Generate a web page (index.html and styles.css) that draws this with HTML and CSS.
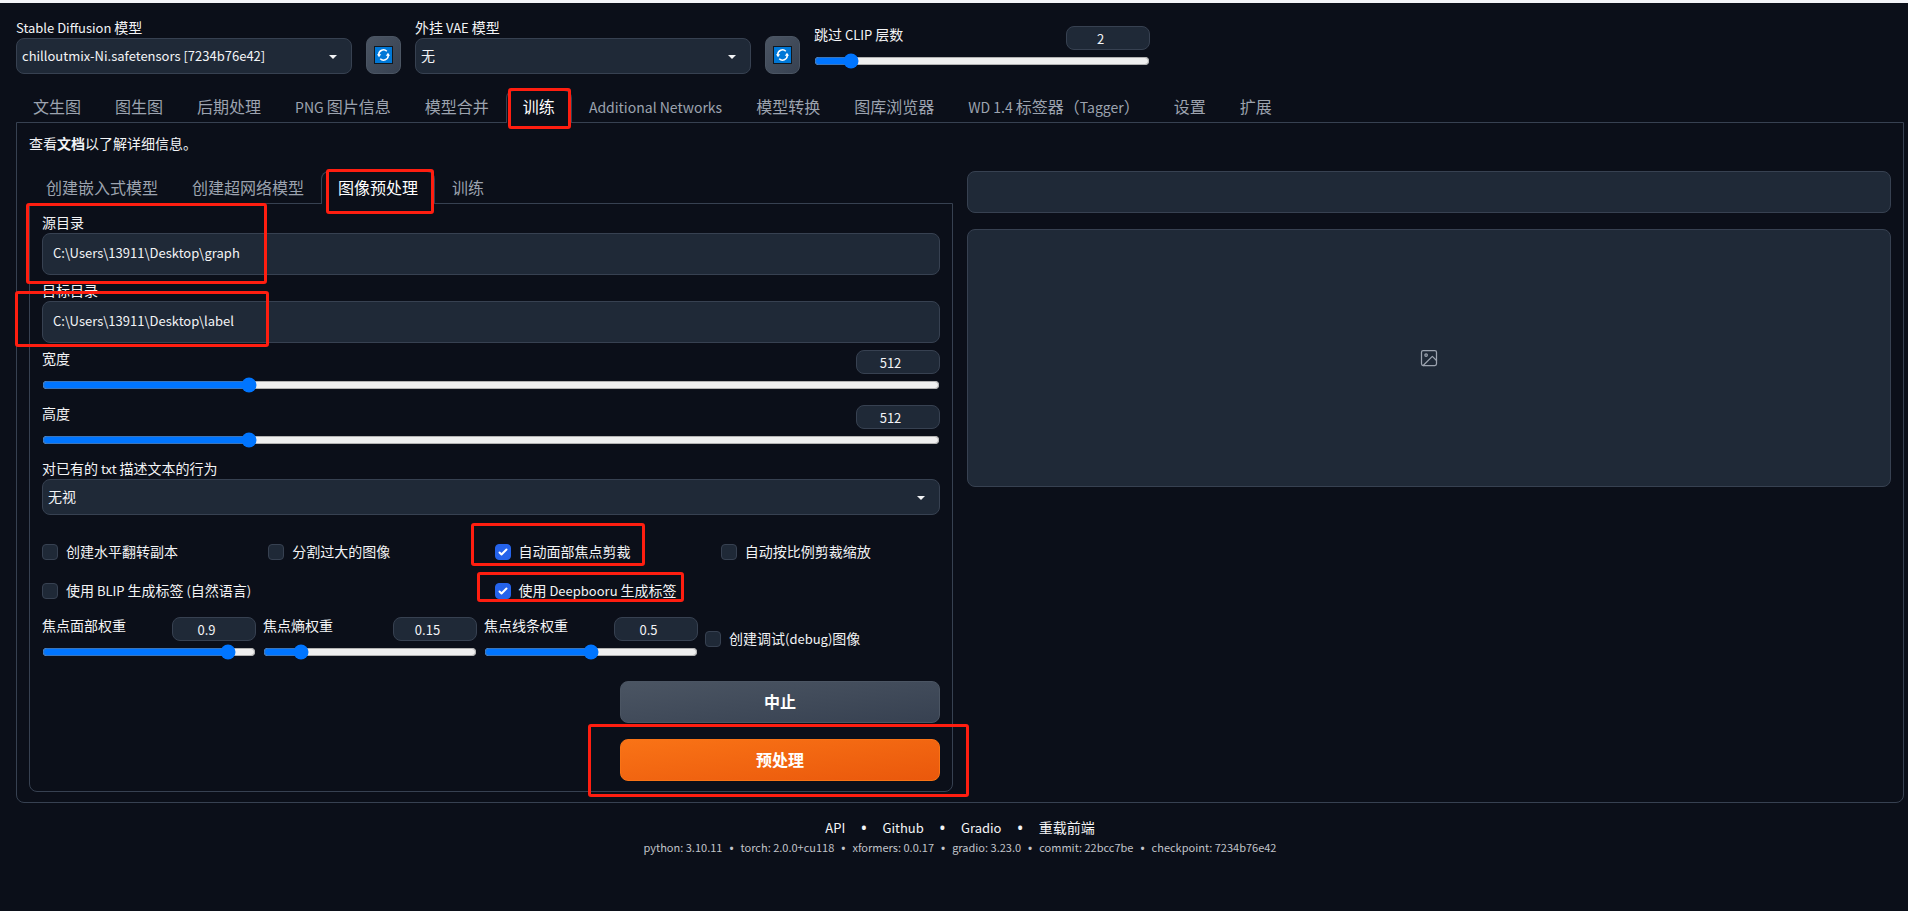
FILE: index.html
```html
<!DOCTYPE html>
<html lang="zh-CN">
<head>
<meta charset="utf-8">
<title>Stable Diffusion</title>
<link rel="stylesheet" href="styles.css">
</head>
<body>
<svg class="sprite" width="0" height="0" aria-hidden="true">
  <symbol id="caret" viewBox="0 0 8 4"><path d="M0 0h8L4 4z" fill="currentColor"/></symbol>
  <symbol id="refresh" viewBox="0 0 19 18">
    <rect x="0" y="0" width="19" height="18" fill="#101820"/>
    <rect x="1" y="1" width="17" height="16" fill="#0078d7"/>
    <path d="M4.700 10V8.500A4.800 4.800 0 0 1 12.800 5.200M14.300 8v1.500A4.800 4.800 0 0 1 6.200 12.800" fill="none" stroke="#fff" stroke-width="1.500"/>
    <path d="M3 8.200h4.200L5 11.200zM16 9.800h-4.200L14 6.800z" fill="#fff"/>
  </symbol>
</svg>
<div class="page">
  <header class="quick">
    <div class="field quick-model">
      <label class="label" for="ckpt"><span class="en">Stable Diffusion </span>模型</label>
      <div class="select-wrap">
        <select id="ckpt" class="select select-en"><option>chilloutmix-Ni.safetensors [7234b76e42]</option></select>
        <svg class="caret"><use href="#caret"/></svg>
      </div>
    </div>
    <button class="tool" type="button" aria-label="刷新模型"><svg class="tool-icon"><use href="#refresh"/></svg></button>
    <div class="field quick-model">
      <label class="label" for="vae">外挂<span class="en"> VAE </span>模型</label>
      <div class="select-wrap">
        <select id="vae" class="select"><option>无</option></select>
        <svg class="caret"><use href="#caret"/></svg>
      </div>
    </div>
    <button class="tool" type="button" aria-label="刷新 VAE"><svg class="tool-icon"><use href="#refresh"/></svg></button>
    <div class="slider quick-clip">
      <div class="slider-head">
        <label class="label" for="clip">跳过<span class="en"> CLIP </span>层数</label>
        <input class="number" type="number" value="2" aria-label="跳过 CLIP 层数">
      </div>
      <input id="clip" class="range" type="range" min="1" max="12" value="2">
    </div>
  </header>

  <nav class="tabs">
    <button class="tab" type="button">文生图</button>
    <button class="tab" type="button">图生图</button>
    <button class="tab" type="button">后期处理</button>
    <button class="tab" type="button"><span class="tab-en">PNG </span>图片信息</button>
    <button class="tab" type="button">模型合并</button>
    <button class="tab tab-active" type="button">训练</button>
    <button class="tab" type="button"><span class="tab-en">Additional Networks</span></button>
    <button class="tab" type="button">模型转换</button>
    <button class="tab" type="button">图库浏览器</button>
    <button class="tab" type="button"><span class="tab-en">WD 1.4 </span>标签器（<span class="tab-en">Tagger</span>）</button>
    <button class="tab" type="button">设置</button>
    <button class="tab" type="button">扩展</button>
  </nav>

  <main class="panel">
    <p class="hint">查看<a class="hint-link" href="#">文档</a>以了解详细信息。</p>
    <div class="columns">
      <section class="column">
        <nav class="tabs">
          <button class="tab" type="button">创建嵌入式模型</button>
          <button class="tab" type="button">创建超网络模型</button>
          <button class="tab tab-active" type="button">图像预处理</button>
          <button class="tab" type="button">训练</button>
        </nav>
        <form class="form">
          <div class="field">
            <label class="label" for="src">源目录</label>
            <input id="src" class="text" type="text" value="C:\Users\13911\Desktop\graph">
          </div>
          <div class="field">
            <label class="label" for="dst">目标目录</label>
            <input id="dst" class="text" type="text" value="C:\Users\13911\Desktop\label">
          </div>
          <div class="slider">
            <div class="slider-head">
              <label class="label" for="width">宽度</label>
              <input class="number" type="number" value="512" aria-label="宽度">
            </div>
            <input id="width" class="range" type="range" min="64" max="2048" step="8" value="512">
          </div>
          <div class="slider">
            <div class="slider-head">
              <label class="label" for="height">高度</label>
              <input class="number" type="number" value="512" aria-label="高度">
            </div>
            <input id="height" class="range" type="range" min="64" max="2048" step="8" value="512">
          </div>
          <div class="field">
            <label class="label" for="txt">对已有的<span class="en"> txt </span>描述文本的行为</label>
            <div class="select-wrap">
              <select id="txt" class="select"><option>无视</option></select>
              <svg class="caret"><use href="#caret"/></svg>
            </div>
          </div>
          <div class="checks">
            <div class="check-row">
              <label class="check"><input class="box" type="checkbox"><span>创建水平翻转副本</span></label>
              <label class="check"><input class="box" type="checkbox"><span>分割过大的图像</span></label>
              <label class="check"><input class="box" type="checkbox" checked><span>自动面部焦点剪裁</span></label>
              <label class="check"><input class="box" type="checkbox"><span>自动按比例剪裁缩放</span></label>
            </div>
            <div class="check-row">
              <label class="check"><input class="box" type="checkbox"><span>使用<span class="en"> BLIP </span>生成标签<span class="en"> (</span>自然语言<span class="en">)</span></span></label>
              <label class="check"><input class="box" type="checkbox" checked><span>使用<span class="en"> Deepbooru </span>生成标签</span></label>
            </div>
          </div>
          <div class="weights">
            <div class="slider">
              <div class="slider-head">
                <label class="label" for="face">焦点面部权重</label>
                <input class="number" type="number" value="0.9" step="0.05" aria-label="焦点面部权重">
              </div>
              <input id="face" class="range" type="range" min="0" max="1" step="0.05" value="0.9">
            </div>
            <div class="slider">
              <div class="slider-head">
                <label class="label" for="entropy">焦点熵权重</label>
                <input class="number" type="number" value="0.15" step="0.05" aria-label="焦点熵权重">
              </div>
              <input id="entropy" class="range" type="range" min="0" max="1" step="0.05" value="0.15">
            </div>
            <div class="slider">
              <div class="slider-head">
                <label class="label" for="edges">焦点线条权重</label>
                <input class="number" type="number" value="0.5" step="0.05" aria-label="焦点线条权重">
              </div>
              <input id="edges" class="range" type="range" min="0" max="1" step="0.05" value="0.5">
            </div>
            <label class="check"><input class="box" type="checkbox"><span>创建调试<span class="en">(debug)</span>图像</span></label>
          </div>
          <div class="actions">
            <button class="btn" type="button">中止</button>
            <button class="btn btn-primary" type="button">预处理</button>
          </div>
        </form>
      </section>
      <section class="column output">
        <div class="result"></div>
        <div class="gallery">
          <svg class="gallery-icon" viewBox="0 0 24 24" fill="none" stroke="currentColor" stroke-width="1.500" stroke-linecap="round" stroke-linejoin="round"><rect x="3" y="3" width="18" height="18" rx="2"/><circle cx="8.500" cy="8.500" r="1.500"/><path d="M21 15l-5-5L5 21"/></svg>
        </div>
      </section>
    </div>
  </main>

  <footer class="footer">
    <div class="links"><a class="link en" href="#">API</a><span class="dot">•</span><a class="link en" href="#">Github</a><span class="dot">•</span><a class="link en" href="#">Gradio</a><span class="dot">•</span><a class="link" href="#">重载前端</a></div>
    <div class="versions"><span>python: 3.10.11</span><span class="dot">•</span><span>torch: 2.0.0+cu118</span><span class="dot">•</span><span>xformers: 0.0.17</span><span class="dot">•</span><span>gradio: 3.23.0</span><span class="dot">•</span><span>commit: 22bcc7be</span><span class="dot">•</span><span>checkpoint: 7234b76e42</span></div>
  </footer>

  <div class="mark mark-train"></div>
  <div class="mark mark-preprocess"></div>
  <div class="mark mark-source"></div>
  <div class="mark mark-target"></div>
  <div class="mark mark-face"></div>
  <div class="mark mark-deepbooru"></div>
  <div class="mark mark-run"></div>
</div>
</body>
</html>
```
FILE: styles.css
```css
* { box-sizing: border-box; }

body {
  margin: 0;
  background: #0b0f19;
  color: #f3f4f6;
  font-family: "Noto Sans CJK SC", sans-serif;
  font-size: 14px;
  line-height: 20px;
}

button, input, select { font: inherit; color: inherit; }

.sprite { position: absolute; }

/* Latin runs are set one step smaller than the Chinese text around them */
.en { font-size: 13px; line-height: 1; }
.tab-en { font-size: 14px; line-height: 1; }

.page {
  position: relative;
  min-height: 100vh;
  padding: 15px 4px 0 16px;
  border-top: 3px solid #f3f4f8;
}

.quick { display: flex; align-items: flex-end; gap: 14px; }
.quick-model { width: 336px; }
.quick-clip { width: 336px; align-self: flex-start; padding-top: 8px; }

.field { display: flex; flex-direction: column; }
.label { display: block; padding-bottom: 2px; line-height: 18px; }

.select-wrap { position: relative; }
.select {
  display: block;
  appearance: none;
  width: 100%;
  height: 36px;
  padding: 0 32px 2px 5px;
  border: 1px solid #374151;
  border-radius: 8px;
  background: #1f2937;
}
.select-en { padding-bottom: 0; font-size: 13px; }
.caret {
  position: absolute;
  top: 17px;
  right: 15px;
  width: 8px;
  height: 4px;
  pointer-events: none;
}

.tool {
  display: flex;
  align-items: center;
  justify-content: center;
  width: 35px;
  height: 38px;
  padding: 0;
  border: 1px solid #4b5563;
  border-radius: 8px;
  background: linear-gradient(to bottom right, #4b5563, #374151);
}
.tool-icon { width: 19px; height: 18px; }

.slider-head { display: flex; justify-content: space-between; align-items: flex-start; }
.slider-head .label { line-height: 16px; }
.number {
  width: 84px;
  height: 24px;
  padding: 0 8px;
  border: 1px solid #374151;
  border-radius: 8px;
  background: #1f2937;
  font-size: 13px;
  text-align: center;
}
.range { display: block; width: 100%; height: 16px; margin: 3px 0 0; }

.tabs { display: flex; align-items: flex-end; }
.tab {
  height: 33px;
  margin-bottom: -1px;
  padding: 0 16px 2px;
  border: 1px solid transparent;
  border-bottom: 0;
  border-radius: 8px 8px 0 0;
  background: none;
  color: #9ca3af;
  font-size: 16px;
  line-height: 24px;
  white-space: nowrap;
}
.tab-active {
  position: relative;
  border-color: #374151;
  background: #0b0f19;
  color: #fff;
}
.quick + .tabs { margin-top: 16px; }

.panel {
  padding: 12px 12px 10px;
  border: 1px solid #374151;
  border-radius: 0 0 8px 8px;
}
.hint { margin: 0; line-height: 16px; }
.hint-link { color: inherit; font-weight: 700; text-decoration: none; }

.columns { display: grid; grid-template-columns: 1fr 1fr; gap: 14px; margin-top: 20px; }

.form {
  padding: 9px 12px 10px;
  border: 1px solid #374151;
  border-radius: 0 0 8px 8px;
}
.form .field + .field { margin-top: 6px; }
.form .field + .slider { margin-top: 7px; }
.form > .slider + .slider { margin-top: 12px; }
.form .slider + .field { margin-top: 11px; }
.text {
  height: 42px;
  padding: 0 10px 4px;
  border: 1px solid #374151;
  border-radius: 8px;
  background: #1f2937;
  font-size: 13px;
}

.checks { display: grid; gap: 19px; margin-top: 27px; }
.check-row { display: grid; grid-auto-flow: column; grid-auto-columns: 1fr; gap: 7px; }
.check { display: flex; align-items: center; gap: 8px; line-height: 18px; white-space: nowrap; }
.check > span { padding-bottom: 2px; }
.box {
  appearance: none;
  width: 16px;
  height: 16px;
  margin: 0;
  border: 1px solid #374151;
  border-radius: 4px;
  background: #1f2937;
}
.box:checked {
  border-color: #2563eb;
  background: #2563eb url("data:image/svg+xml,%3Csvg viewBox='0 0 16 16' fill='white' xmlns='http://www.w3.org/2000/svg'%3E%3Cpath d='M12.207 4.793a1 1 0 010 1.414l-5 5a1 1 0 01-1.414 0l-2-2a1 1 0 011.414-1.414L6.500 9.086l4.293-4.293a1 1 0 011.414 0z'/%3E%3C/svg%3E") center / 16px 16px;
}

.weights { display: grid; grid-template-columns: 1fr 1fr 1fr 235px; gap: 7px; margin-top: 16px; }

.actions { display: grid; gap: 16px; width: 320px; margin: 21px 0 0 auto; }
.btn {
  height: 42px;
  padding: 0 16px 2px;
  border: 1px solid #4b5563;
  border-radius: 8px;
  background: linear-gradient(to bottom right, #4b5563, #374151);
  color: #fff;
  font-size: 16px;
  font-weight: 700;
}
.btn-primary {
  border-color: #f97316;
  background: linear-gradient(to bottom right, #f97316, #ea580c);
}

.output { display: flex; flex-direction: column; gap: 16px; }
.result { height: 42px; border: 1px solid #374151; border-radius: 8px; background: #1f2937; }
.gallery {
  display: flex;
  align-items: center;
  justify-content: center;
  height: 258px;
  border: 1px solid #374151;
  border-radius: 8px;
  background: #1f2937;
  color: #9ca3af;
}
.gallery-icon { width: 20px; height: 20px; }

.footer { padding: 14px 0 20px; text-align: center; }
.links, .versions { display: flex; justify-content: center; align-items: baseline; }
.links { gap: 16px; }
.versions { gap: 7px; font-size: 11px; line-height: 18px; color: #c2c4c9; }
.link { color: inherit; line-height: 20px; text-decoration: none; }
.dot { font-family: "Open Sans", sans-serif; font-weight: 700; }

.mark { position: absolute; border: 3px solid #ff1e10; border-radius: 3px; pointer-events: none; }
.mark-train { left: 508px; top: 85px; width: 63px; height: 41px; }
.mark-preprocess { left: 326px; top: 166px; width: 108px; height: 45px; }
.mark-source { left: 26px; top: 200px; width: 241px; height: 81px; }
.mark-target { left: 15px; top: 288px; width: 254px; height: 56px; }
.mark-face { left: 471px; top: 520px; width: 174px; height: 43px; }
.mark-deepbooru { left: 477px; top: 569px; width: 207px; height: 30px; }
.mark-run { left: 588px; top: 721px; width: 381px; height: 73px; }
```
